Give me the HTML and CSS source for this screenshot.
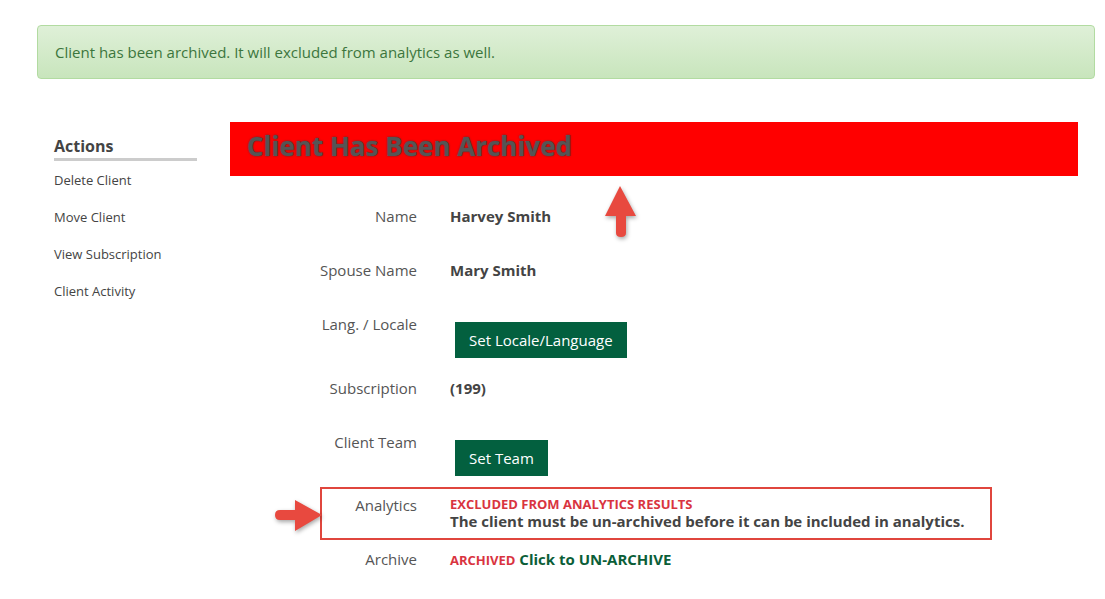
FILE: index.html
```html
<!DOCTYPE html>
<html lang="en">
<head>
    <meta charset="UTF-8">
    <title>Client Details</title>
    <link rel="stylesheet" href="styles.css">
</head>
<body>

<div class="alert">Client has been archived. It will excluded from analytics as well.</div>

<div class="main">
    <div class="sidebar">
        <h3>Actions</h3>
        <a href="#">Delete Client</a>
        <a href="#">Move Client</a>
        <a href="#">View Subscription</a>
        <a href="#">Client Activity</a>
    </div>

    <div class="content">
        <div class="banner">Client Has Been Archived</div>

        <svg class="arrow-up" width="34" height="52" viewBox="0 0 34 52">
            <path d="M16 1 L32 31 L22 31 L22 48 Q22 52 17 52 Q12 52 12 48 L12 31 L1 31 Z" fill="#e8493f"/>
        </svg>

        <div class="details">
            <div class="field">
                <div class="label">Name</div>
                <div class="value">Harvey Smith</div>
            </div>
            <div class="field">
                <div class="label">Spouse Name</div>
                <div class="value">Mary Smith</div>
            </div>
            <div class="field">
                <div class="label">Lang. / Locale</div>
                <div class="value"><button class="btn">Set Locale/Language</button></div>
            </div>
            <div class="field">
                <div class="label">Subscription</div>
                <div class="value">(199)</div>
            </div>
            <div class="field">
                <div class="label">Client Team</div>
                <div class="value"><button class="btn">Set Team</button></div>
            </div>
            <div class="field boxed">
                <svg class="arrow-right" width="50" height="32" viewBox="0 0 50 32">
                    <path d="M48 16 L21 1 L21 11 L6 11 Q1 11 1 16 Q1 21 6 21 L21 21 L21 32 Z" fill="#e8493f"/>
                </svg>
                <div class="label">Analytics</div>
                <div class="value">
                    <div class="warn">EXCLUDED FROM ANALYTICS RESULTS</div>
                    <div>The client must be un-archived before it can be included in analytics.</div>
                </div>
            </div>
            <div class="field">
                <div class="label">Archive</div>
                <div class="value"><span class="warn">ARCHIVED</span> <a class="unarchive" href="#">Click to UN-ARCHIVE</a></div>
            </div>
        </div>
    </div>
</div>

</body>
</html>
```

FILE: styles.css
```css
body {
    margin: 0;
    padding: 0;
    font-family: "Open Sans", Arial, sans-serif;
    color: #555;
    background-color: #fff;
}
.alert {
    box-sizing: border-box;
    width: 1058px;
    height: 54px;
    margin: 25px 0 0 37px;
    padding: 0 17px;
    display: flex;
    align-items: center;
    font-size: 15px;
    color: #3c763d;
    background: linear-gradient(#dff0d8, #c8e5bc);
    border: 1px solid #b2dba1;
    border-radius: 4px;
}
.main {
    display: flex;
    margin-top: 43px;
}
.sidebar {
    width: 143px;
    margin-left: 54px;
    padding-top: 13px;
}
.sidebar h3 {
    margin: 0 0 10px;
    padding-bottom: 1px;
    font-size: 16px;
    line-height: 22px;
    color: #444;
    border-bottom: 3px solid #ccc;
}
.sidebar a {
    display: block;
    font-size: 13px;
    line-height: 18px;
    color: #444;
    text-decoration: none;
    margin-bottom: 19px;
}
.content {
    position: relative;
    width: 848px;
    margin-left: 33px;
}
.banner {
    height: 54px;
    line-height: 49px;
    padding-left: 17px;
    background-color: #f00;
    font-size: 26px;
    font-weight: bold;
    color: #555;
    text-shadow: 0 0 2px #333;
}
.arrow-up {
    position: absolute;
    left: 374px;
    top: 63px;
    filter: drop-shadow(1px 2px 2px rgba(0, 0, 0, 0.35));
}
.details {
    padding-top: 30px;
}
.field {
    display: flex;
    align-items: flex-start;
    padding-bottom: 20px;
}
.label {
    width: 187px;
    min-height: 34px;
    flex-shrink: 0;
    text-align: right;
    font-size: 15px;
    line-height: 20px;
}
.value {
    margin-left: 33px;
    font-size: 15px;
    line-height: 20px;
    font-weight: bold;
    color: #444;
}
.btn {
    margin: 8px 0 0 5px;
    height: 36px;
    padding: 0 14px;
    border: 0;
    border-radius: 0;
    background-color: #03603f;
    color: #fff;
    font-family: "Open Sans", Arial, sans-serif;
    font-size: 15px;
    cursor: pointer;
}
.boxed {
    position: relative;
    box-sizing: border-box;
    width: 672px;
    margin: -9px 0 9px 90px;
    padding: 6px 0 8px;
    border: 2px solid #e0463d;
}
.boxed .label {
    width: 95px;
    min-height: 0;
}
.boxed .value {
    padding-top: 1px;
    line-height: 18px;
}
.boxed .warn {
    line-height: 16px;
}
.arrow-right {
    position: absolute;
    left: -48px;
    top: 10px;
    filter: drop-shadow(1px 2px 2px rgba(0, 0, 0, 0.35));
}
.warn {
    font-size: 13px;
    font-weight: bold;
    color: #d9343f;
}
.unarchive {
    color: #0b5e38;
    text-decoration: none;
}
```
